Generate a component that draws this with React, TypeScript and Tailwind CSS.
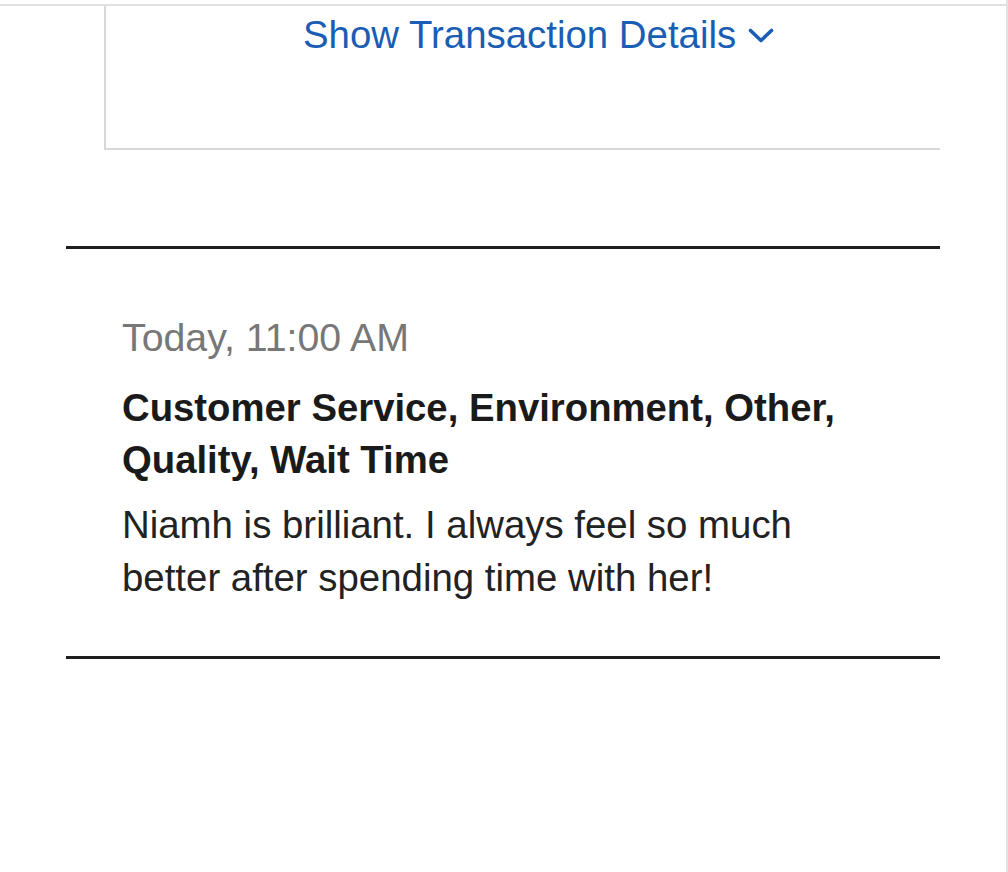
import React from 'react';

const Chevron: React.FC = () => (
  <svg width="26" height="16" viewBox="0 0 26 16" fill="none" className="ml-[12px] mt-[15px]">
    <path d="M2.5 2.5 L13 12.5 L23.5 2.5" stroke="#1a5db4" strokeWidth="3.6" strokeLinecap="round" strokeLinejoin="round" />
  </svg>
);

const App: React.FC = () => {
  return (
    <div
      className="w-[1008px] h-[872px] bg-white border-r-2 border-[#e2e2e2] pt-[4px] overflow-hidden"
      style={{ fontFamily: '"Liberation Sans", Arial, sans-serif' }}
    >
      <div className="border-t-2 border-[#e0e0e0]" />

      {/* transaction card */}
      <div className="ml-[104px] w-[836px] h-[144px] border-l-2 border-b-2 border-[#d8d8d8] pt-[7px] pl-[197px]">
        <div className="flex items-start text-[38.4px] leading-[44px] text-[#1a5db4]">
          <span>Show Transaction Details</span>
          <Chevron />
        </div>
      </div>

      <div className="ml-[66px] w-[874px] h-[3px] bg-[#1e1e1e] mt-[96px]" />

      {/* feedback entry */}
      <div className="ml-[122px] w-[762px]">
        <div className="mt-[66px] text-[39.3px] leading-[44px] text-[#777777]">Today, 11:00 AM</div>
        <div className="mt-[23px] text-[38.3px] leading-[52px] font-bold text-[#1a1a1a]">
          Customer Service, Environment, Other, Quality, Wait Time
        </div>
        <div className="mt-[12px] text-[38.4px] leading-[53px] text-[#222222]">
          Niamh is brilliant. I always feel so much better after spending time with her!
        </div>
      </div>

      <div className="ml-[66px] w-[874px] h-[3px] bg-[#1e1e1e] mt-[52px]" />
    </div>
  );
};

export default App;
